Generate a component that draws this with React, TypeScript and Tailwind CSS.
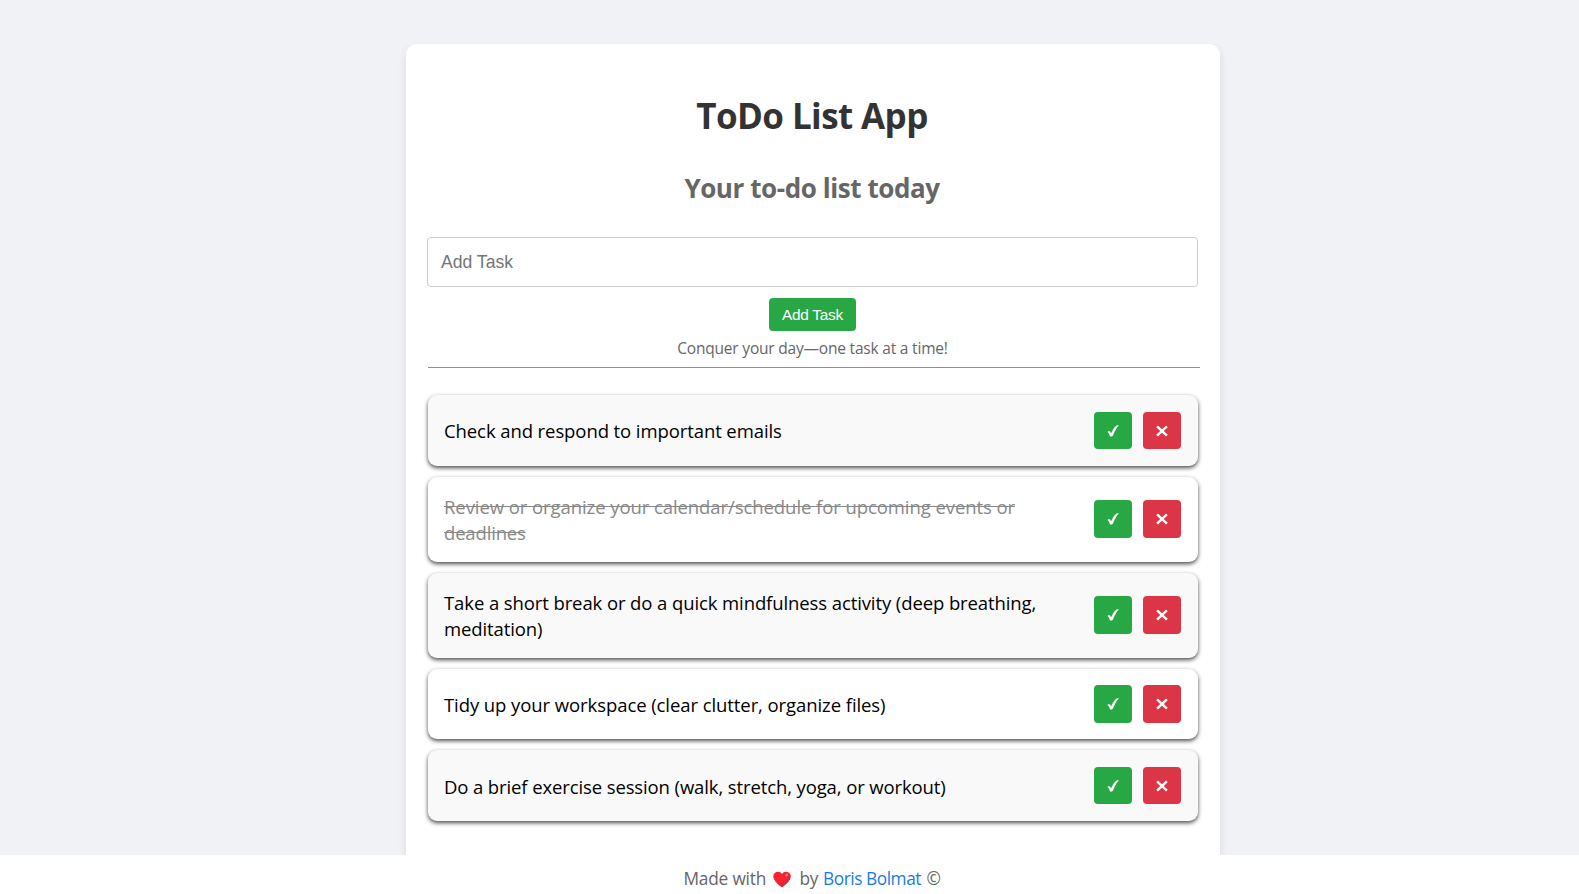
import { useState } from "react";

type Task = {
  lines: { text: string; spacing: string }[];
  done: boolean;
  box: string;
  textOffset: string;
  buttons: string;
  buttonHeight: string;
};

const initialTasks: Task[] = [
  {
    lines: [{ text: "Check and respond to important emails", spacing: "tracking-[-0.09px]" }],
    done: false,
    box: "h-[71px] mb-[11px] bg-[#f9f9f9]",
    textOffset: "pt-px",
    buttons: "pb-0",
    buttonHeight: "h-[37px]",
  },
  {
    lines: [
      { text: "Review or organize your calendar/schedule for upcoming events or", spacing: "tracking-[-0.075px]" },
      { text: "deadlines", spacing: "tracking-[-0.17px]" },
    ],
    done: true,
    box: "h-[85px] mb-[11px] bg-white",
    textOffset: "pt-0",
    buttons: "pb-px",
    buttonHeight: "h-[38px]",
  },
  {
    lines: [
      { text: "Take a short break or do a quick mindfulness activity (deep breathing,", spacing: "tracking-[-0.1px]" },
      { text: "meditation)", spacing: "tracking-[-0.1px]" },
    ],
    done: false,
    box: "h-[85px] mb-[11px] bg-[#f9f9f9]",
    textOffset: "pt-0",
    buttons: "pb-px",
    buttonHeight: "h-[38px]",
  },
  {
    lines: [{ text: "Tidy up your workspace (clear clutter, organize files)", spacing: "tracking-[-0.08px]" }],
    done: false,
    box: "h-[70px] mb-[11px] bg-white",
    textOffset: "pt-[2px]",
    buttons: "pb-0",
    buttonHeight: "h-[38px]",
  },
  {
    lines: [{ text: "Do a brief exercise session (walk, stretch, yoga, or workout)", spacing: "tracking-[-0.115px]" }],
    done: false,
    box: "h-[71px] bg-[#f9f9f9]",
    textOffset: "pt-[2px]",
    buttons: "pb-0",
    buttonHeight: "h-[37px]",
  },
];

function CheckIcon() {
  return (
    <svg width="12" height="12" viewBox="0 0 12 12" fill="#fff" aria-hidden="true">
      <path d="M0.2 6.9 C1.1 6 2.5 5.9 3.1 6.6 L4.1 8.5 C5.8 4.8 7.6 1.8 9.3 0.8 C10 0.3 10.9 0.2 11.9 0.2 C9.3 3.2 7.3 6.9 5.9 10.7 C5.1 11.4 4 11.7 3.1 11.6 C2.5 10 1.9 8.5 1.4 7.8 C1.1 7.3 0.8 7 0.2 6.9 Z" />
    </svg>
  );
}

function CrossIcon() {
  return (
    <svg width="12" height="12" viewBox="0 0 12 12" fill="none" stroke="#fff" strokeWidth="2.4" aria-hidden="true">
      <path d="M1.1 1.3 L10.9 10.7 M10.9 1.3 L1.1 10.7" />
    </svg>
  );
}

export default function App() {
  const [tasks, setTasks] = useState(initialTasks);
  const toggle = (index: number) =>
    setTasks(tasks.map((task, i) => (i === index ? { ...task, done: !task.done } : task)));
  const remove = (index: number) => setTasks(tasks.filter((_, i) => i !== index));

  return (
    <div className="flex h-[894px] flex-col overflow-hidden bg-[#f0f2f5] font-['Open_Sans','Noto_Sans',sans-serif]">
      <div className="flex min-h-0 flex-1 justify-center pt-[44px] pl-[47px]">
        <main className="h-[900px] w-[814px] shrink-0 rounded-[11px] bg-white px-[22px] pt-[48px] shadow-[0_4px_9px_rgba(0,0,0,0.1)]">
          <h1 className="w-[768px] text-center text-[35px] leading-[48px] font-bold tracking-[-0.6px] whitespace-nowrap text-[#333]">
            ToDo List App
          </h1>
          <h2 className="mt-[30px] w-[768px] text-center text-[26px] leading-[36px] font-bold tracking-[-0.43px] whitespace-nowrap text-[#666]">
            Your to-do list today
          </h2>
          <div className="mt-[31px] flex w-[769px] flex-col items-center">
            <input
              placeholder="Add Task"
              className="h-[50px] w-[771px] shrink-0 rounded-[4px] border border-[#ccc] px-[13px] font-['Liberation_Sans',sans-serif] text-[17.6px] placeholder:text-[#757575]"
            />
            <button className="mt-[11px] h-[33px] w-[87px] rounded-[4px] bg-[#28a745] font-['Liberation_Sans',sans-serif] text-[15.4px] leading-[33px] tracking-[-0.28px] whitespace-nowrap text-white">
              Add Task
            </button>
          </div>
          <p className="mt-[6px] w-[769px] text-center text-[15.5px] leading-[22px] tracking-[-0.2px] whitespace-nowrap text-[#666]">
            Conquer your day—one task at a time!
          </p>
          <hr className="mt-[8px] w-[772px] border-t border-[#8e8e8e]" />
          <ul className="mt-[27px]">
            {tasks.map((task, index) => (
              <li
                key={task.lines[0].text}
                className={`${task.box} flex w-[770px] items-center justify-between rounded-[9px] pr-[17px] pl-[16px] shadow-[0_2px_4px_rgba(0,0,0,0.7)]`}
              >
                <div
                  className={`${task.textOffset} text-[18.5px] leading-[26px] whitespace-nowrap ${task.done ? "text-[#888] line-through" : "text-black"}`}
                >
                  {task.lines.map((line) => (
                    <div key={line.text} className={line.spacing}>
                      {line.text}
                    </div>
                  ))}
                </div>
                <div className={`${task.buttons} flex gap-[11px]`}>
                  <button
                    aria-label="Complete"
                    onClick={() => toggle(index)}
                    className={`${task.buttonHeight} flex w-[38px] items-center justify-center rounded-[4px] bg-[#28a745]`}
                  >
                    <CheckIcon />
                  </button>
                  <button
                    aria-label="Delete"
                    onClick={() => remove(index)}
                    className={`${task.buttonHeight} flex w-[38px] items-center justify-center rounded-[4px] bg-[#dc3545]`}
                  >
                    <CrossIcon />
                  </button>
                </div>
              </li>
            ))}
          </ul>
        </main>
      </div>
      <footer className="flex h-[39px] shrink-0 items-start bg-white pt-[11px] pl-[683.5px] text-[17.3px] leading-[26px] whitespace-nowrap text-[#666]">
        <span className="w-[89.5px] tracking-[-0.2px]">Made with</span>
        <svg className="mt-[5px] mr-[8.5px]" width="18" height="17" viewBox="0 0 18 17" aria-hidden="true">
          <path d="M9 16.2 C5.5 13.6 0.3 9.8 0.3 5.2 C0.3 0.6 6.5 -0.8 9 3 C11.5 -0.8 17.7 0.6 17.7 5.2 C17.7 9.8 12.5 13.6 9 16.2 Z" fill="#f5242f" />
          <path d="M17 3 C18.8 8.5 13.4 12.8 9 16.2 C7.6 15.2 5.6 13.7 3.8 11.9 C11 13.4 16.4 8.6 17 3 Z" fill="#d42a3a" />
          <ellipse cx="13.6" cy="4.1" rx="1.1" ry="1.8" transform="rotate(30 13.6 4.1)" fill="#ff7a80" />
        </svg>
        <span className="w-[23.5px] tracking-[-0.2px]">by</span>
        <a className="w-[103.5px] tracking-[-0.45px] text-[#1a7be0]">Boris Bolmat</a>
        <span>©</span>
      </footer>
    </div>
  );
}
